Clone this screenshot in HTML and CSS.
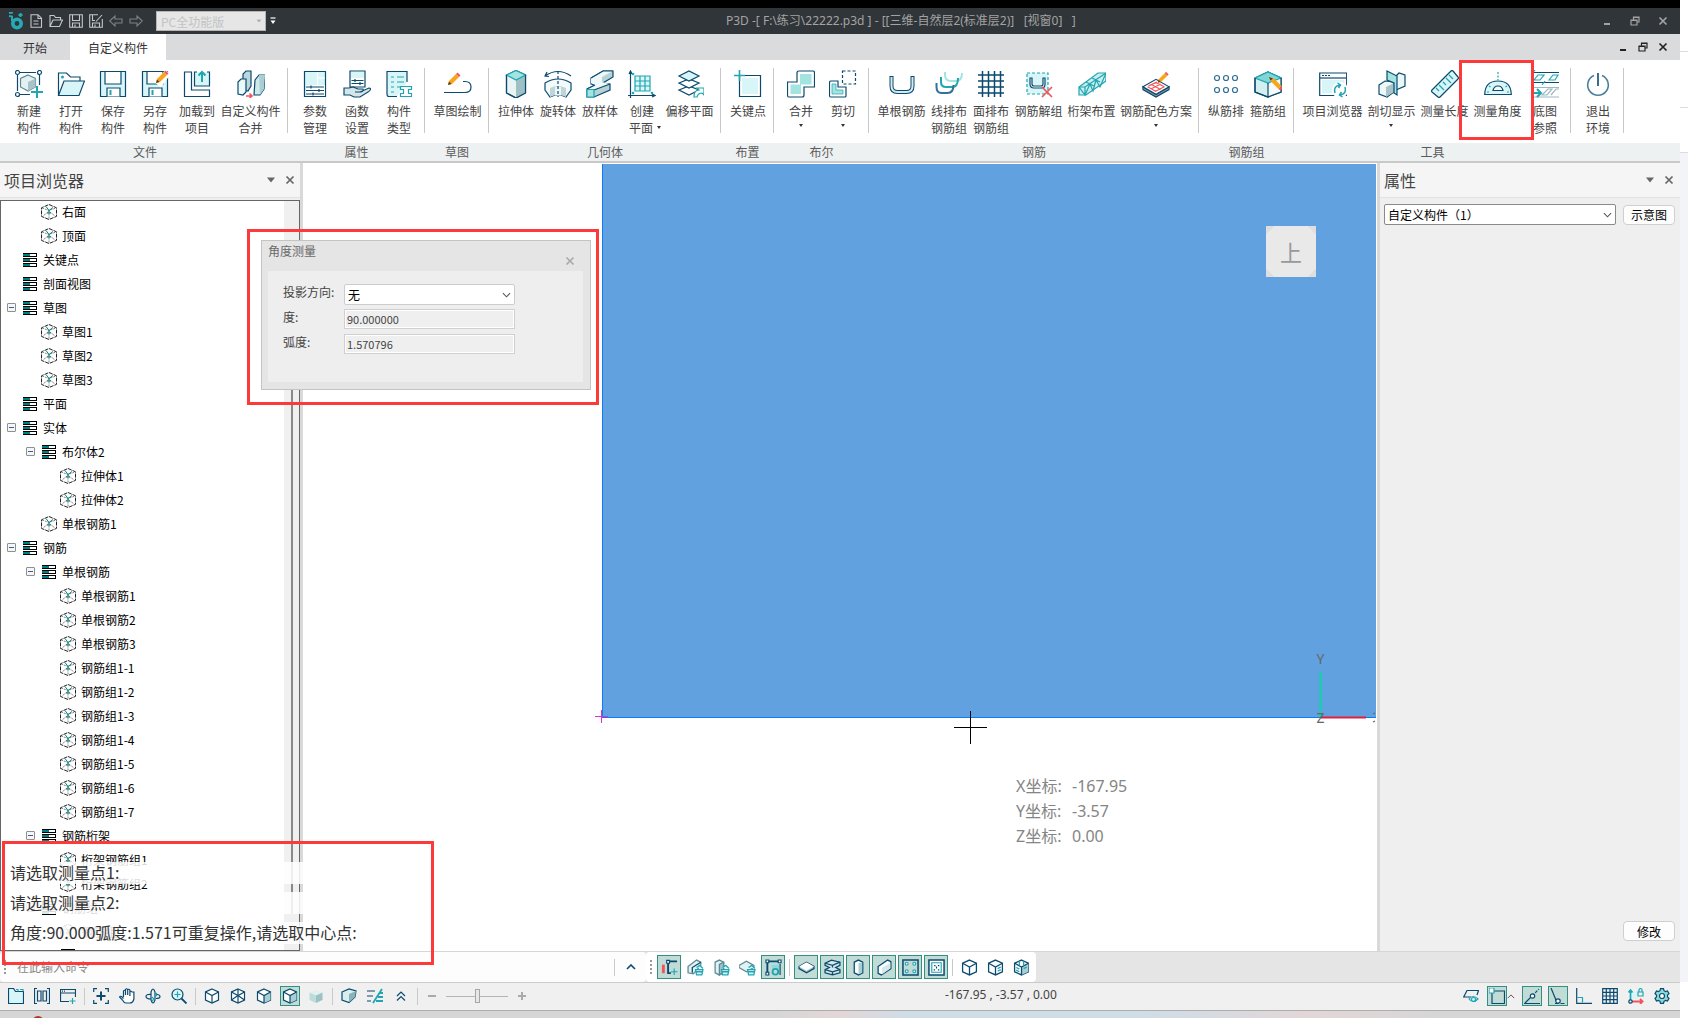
FILE: index.html
```html
<!DOCTYPE html>
<html lang="zh-CN">
<head>
    <meta charset="UTF-8">
    <meta name="viewport" content="width=device-width, initial-scale=1.0">
    <title>P3D</title>
    <link rel="stylesheet" href="styles.css">
</head>
<body>
<!-- 公用图标 -->
<svg class="defs" width="0" height="0" aria-hidden="true">
    <symbol id="i-cube" viewBox="0 0 16 16">
        <path d="M8 .5L15.500 3.800v8.600L8 15.500.500 12.400V3.800z" fill="#fff" stroke="#222" stroke-dasharray="4 1"/>
        <path d="M1 4l7 2.500L15 4M8 6.500V15M7 8l-5 4M9 8l5 4" stroke="#777" stroke-width=".9" stroke-dasharray="2 1"/>
        <path d="M5 2.500l3 4 4-3M8 6.500v3M6 9h4" stroke="#0a8080"/>
    </symbol>
    <symbol id="i-list" viewBox="0 0 16 16">
        <path d="M1 1h14v4H1zM1 6h14v4H1zM1 11h14v4H1z" fill="#000" stroke="none"/>
        <path d="M1 2h7v2H1zM1 7h7v2H1zM1 12h7v2H1z" fill="#008080" stroke="none"/>
        <path d="M8 2h6v2H8zM8 7h6v2H8zM8 12h6v2H8z" fill="#fff" stroke="none"/>
    </symbol>
    <symbol id="i-down" viewBox="0 0 10 6"><path d="M1 1l4 4 4-4" stroke="#555"/></symbol>
    <symbol id="i-up" viewBox="0 0 10 6"><path d="M1 5l4-4 4 4" stroke="currentColor"/></symbol>
    <symbol id="i-close" viewBox="0 0 10 10"><path d="M1.500 1.500l7 7M8.500 1.500l-7 7" stroke="currentColor" stroke-width="1.700"/></symbol>
    <symbol id="i-min" viewBox="0 0 10 10"><path d="M2 8h6" stroke="currentColor" stroke-width="2"/></symbol>
    <symbol id="i-restore" viewBox="0 0 10 10"><path d="M1 4h6v5H1zM1 4.500h6M3.500 3.500V1H9v5H7.500M3.500 1.500H9" stroke="currentColor" stroke-width="1.200"/></symbol>
    <symbol id="i-tri" viewBox="0 0 10 6"><path d="M1 .500h8l-4 5z" fill="currentColor" stroke="none"/></symbol>
    <symbol id="i-save" viewBox="0 0 28 28">
        <path d="M1.500 1.500h25v25h-25z" fill="#d8f6f7" stroke="#0b4a6f"/>
        <path d="M6 1.500h16V14H6z" fill="#fff" stroke="#0b4a6f"/>
        <path d="M8 26.500V18h13v8.500" fill="#fff" stroke="#0b4a6f"/>
        <path d="M11.500 20v5" stroke="#20a5b2" stroke-width="2"/>
    </symbol>
    <symbol id="i-pencil" viewBox="0 0 14 14">
        <path d="M1 13l1-4 7-7 3 3-7 7z" fill="#f9a51a" stroke="none"/>
        <path d="M9 2l1.500-1.500 3 3L12 5z" fill="#f2545b" stroke="none"/>
        <path d="M1 13l1-3.500 2.500 2.500z" fill="#5a3a22" stroke="none"/>
    </symbol>
    <symbol id="i-box" viewBox="0 0 16 16">
        <path d="M8 1l6.500 3v8L8 15l-6.500-3V4z" fill="#fff" stroke="#0b4a6f"/>
        <path d="M1.500 4L8 7.500 14.500 4M8 7.500V15" stroke="#0b4a6f"/>
    </symbol>
    <symbol id="i-boxf" viewBox="0 0 16 16">
        <path d="M8 1l6.500 3v8L8 15l-6.500-3V4z" fill="#fff" stroke="#0b4a6f"/>
        <path d="M8 7.500L14.500 4v8L8 15z" fill="#a8cfd3" stroke="none"/>
        <path d="M1.500 4L8 7.500 14.500 4M8 7.500V15" stroke="#0b4a6f"/>
    </symbol>
    <symbol id="i-bucket" viewBox="0 0 9 11"><path d="M1 5h7l-1 5H2zM1 7h7M2 3l3-2 3 3" fill="#d8f6f7" stroke="#20a5b2"/></symbol>
</svg>

<div class="screen">
<div class="app">
    <header class="titlebar">
        <svg class="logo" viewBox="0 0 16 18"><circle cx="9" cy="11.500" r="4.200" stroke="#27a9b5" stroke-width="3.600"/><path d="M4 9V4.500L1 4M1 1l4-.500M12.500 1v4M10.500 3h4" stroke="#27a9b5" stroke-width="2"/></svg>
        <button class="tb" aria-label="新建"><svg viewBox="0 0 14 14"><path d="M2 .700h7l3.500 3.500v9H2zM9 1v3.500h3.500M4.500 7h5M4.500 10h5"/></svg></button>
        <button class="tb" aria-label="打开"><svg viewBox="0 0 14 14"><path d="M1 12.500V1.500h4l1.500 2h5v2.500M1 12.500L4 6h9.500l-3 6.500z"/></svg></button>
        <button class="tb" aria-label="保存"><svg viewBox="0 0 14 14"><path d="M.700.700h12.600v12.600H.700zM3.500 1v5.500h7V1M3.500 13V9h7v4M6 10.500V13"/></svg></button>
        <button class="tb" aria-label="另存"><svg viewBox="0 0 14 14"><path d="M9 .700H.700v12.600h12.600V5M3.500 1v5.500H6M3.500 13V9h7v4M6 10.500V13M7 7.500L13 1"/></svg></button>
        <button class="tb dim" aria-label="撤销"><svg viewBox="0 0 14 14"><path d="M.700 7L6 2v3h7v4H6v3z"/></svg></button>
        <button class="tb dim" aria-label="重做"><svg viewBox="0 0 14 14"><path d="M13.300 7L8 2v3H1v4h7v3z"/></svg></button>
        <div class="edition">
            <select aria-label="版本" disabled><option>PC全功能版</option></select>
            <svg viewBox="0 0 10 6"><use href="#i-tri"/></svg>
        </div>
        <button class="more" aria-label="更多"><svg viewBox="0 0 6 8"><path d="M.500 1h5" stroke="#fff"/><path d="M.500 3.500h5L3 7z" fill="#fff" stroke="none"/></svg></button>
        <h1>P3D -[ F:\练习\22222.p3d ] - [[三维-自然层2(标准层2)] &nbsp;&nbsp;[视窗0] &nbsp;&nbsp;]</h1>
        <div class="win-buttons">
            <button aria-label="最小化"><svg><use href="#i-min"/></svg></button>
            <button aria-label="还原"><svg><use href="#i-restore"/></svg></button>
            <button aria-label="关闭"><svg><use href="#i-close"/></svg></button>
        </div>
    </header>

    <nav class="tabs">
        <a href="#start" class="tab">开始</a>
        <a href="#custom" class="tab active">自定义构件</a>
        <div class="doc-buttons">
            <button aria-label="最小化视窗"><svg><use href="#i-min"/></svg></button>
            <button aria-label="还原视窗"><svg><use href="#i-restore"/></svg></button>
            <button aria-label="关闭视窗"><svg><use href="#i-close"/></svg></button>
        </div>
    </nav>

    <div class="ribbon">
        <section class="group">
            <div class="tools">
                <button class="tool"><svg viewBox="0 0 28 28"><path d="M5 2.500h16M2.500 5v16M24.500 5v10M5 24.500h10"/><g fill="#fff"><circle cx="2.500" cy="2.500" r="2"/><circle cx="24.500" cy="2.500" r="2"/><circle cx="2.500" cy="24.500" r="2"/></g><path d="M13 5l7.500 3.500v8.500L13 21l-7.500-4V8.500z" fill="#e4f1f2" stroke="#5c8b96"/><path d="M13 12l7.500-3.500V17L13 21z" fill="#a9c3c8" stroke="none"/><path d="M22 16v12M16 22h12" stroke="#20a5b2" stroke-width="2"/></svg><span>新建<br>构件</span></button>
                <button class="tool"><svg viewBox="0 0 28 28"><path d="M1.500 25V3h8l4 4H23v5" fill="#fff"/><path d="M1.500 25.500L7 11h20.500L22 25.500z" fill="#d8f6f7"/><circle cx="5.500" cy="7" r="1.500" fill="#20a5b2" stroke="none"/></svg><span>打开<br>构件</span></button>
                <button class="tool"><svg><use href="#i-save"/></svg><span>保存<br>构件</span></button>
                <button class="tool"><svg viewBox="0 0 28 28"><use href="#i-save" width="28" height="28"/><path d="M17 15L27 2" stroke="#fff" stroke-width="7"/><use href="#i-pencil" x="14" y="0" width="14" height="14"/></svg><span>另存<br>构件</span></button>
                <button class="tool"><svg viewBox="0 0 28 28"><path d="M1.500 2h7v18h18v6.500h-25z" fill="#fff"/><path d="M14 2h-2.500v14h15V2H24" fill="#d8f6f7"/><path d="M19 12V2M15.500 5.500L19 2l3.500 3.500" stroke="#20a5b2" stroke-width="2"/></svg><span>加载到<br>项目</span></button>
                <button class="tool w5"><svg viewBox="0 0 28 28"><path d="M6 20V4l3-3h5v15l-3 5z" fill="#b9d7dc"/><path d="M1 24V12l3-3h5v13l-3 3z" fill="#eafafa"/><path d="M17 25l1-15 4-5h6l-1 14-4 6z" fill="#cfe8ea"/><path d="M22 5l6 0-1 14-4 6z" fill="#a8cfd3" stroke="none"/><path d="M9 26h6M12.500 23.500L15 26l-2.500 2" stroke="#f2545b" stroke-width="1.600"/></svg><span>自定义构件<br>合并</span></button>
            </div>
            <h2>文件</h2>
        </section>
        <section class="group">
            <div class="tools">
                <button class="tool"><svg viewBox="0 0 28 28"><path d="M3.500 1.500h21v25h-21z" fill="#d8f6f7"/><path d="M5 15h19v11H5z" fill="#fff" stroke="none"/><path d="M16.500 2v13M16.500 8H24" stroke="#fff"/><path d="M5 17h18M5 20.500h18M5 24h18M10 15.500v3M18 19v3M12 22.500v3"/></svg><span>参数<br>管理</span></button>
                <button class="tool"><svg viewBox="0 0 28 28"><path d="M7 1h15v16H7z" fill="#fff"/><path d="M8 2h13v6H8z" fill="#d8f6f7" stroke="none"/><path d="M8.500 10.500h12M8.500 13.500h12M12 9v3M17 12v3"/><path d="M1 18h5l4-1 5 2h5c1 2-1 3-4 3h-4 5l9-4c3 0 1 3-1 4l-8 5h-6l-4-2H1z" fill="#d5e5e8"/></svg><span>函数<br>设置</span></button>
                <button class="tool"><svg viewBox="0 0 28 28"><path d="M12 26.500H4Q2 26.500 2 24V1.500h20V12" fill="#d8f6f7"/><path d="M6 7h3M6 12h3M6 17h3M6 22h3M12 7h7M12 12h7M12 17h3" stroke="#20a5b2"/><path d="M15.500 16.500h11v3h-3v4h3v3h-11v-3h3v-4h-3z" fill="#fff" stroke="#20a5b2"/></svg><span>构件<br>类型</span></button>
            </div>
            <h2>属性</h2>
        </section>
        <section class="group">
            <div class="tools">
                <button class="tool w4"><svg viewBox="0 0 28 28"><path d="M0 22.500h21q6 0 6-5.500t-6-5.500h-2"/><use href="#i-pencil" x="3" y="2" width="14" height="14"/></svg><span>草图绘制</span></button>
            </div>
            <h2>草图</h2>
        </section>
        <section class="group">
            <div class="tools">
                <button class="tool"><svg viewBox="0 0 28 28"><path d="M4.500 5l9.500-4.500L23.500 5v18L14 28l-9.500-5z" fill="#eaf4f5"/><path d="M14 10l9.500-5v18L14 28z" fill="#9fc1c6" stroke="none"/><path d="M4.500 5l9.500-4.500L23.500 5 14 10z" fill="#a3e4e1" stroke="#20a5b2"/><path d="M4.500 5v18L14 28l9.500-5V5"/></svg><span>拉伸体</span></button>
                <button class="tool"><svg viewBox="0 0 28 28"><path d="M1 6q13-9 26 0M3 2L1 6l4 .500"/><path d="M1 13q13-8 26 0v7l-5 7q-8-4-16 0l-5-7z" fill="#f4fafa"/><path d="M6 18q8-4 16 0v9q-8-4-16 0z" fill="#bfd6d9" stroke="none"/><path d="M11 17q3-.600 6 0v8.500q-3-.500-6 0z" fill="#eef6f7" stroke="none"/><path d="M14 1v26" stroke-dasharray="3 2"/></svg><span>旋转体</span></button>
                <button class="tool"><svg viewBox="0 0 28 28"><path d="M1 19l8-4-4-1V8L17 1h10v6l-10 6 7 1v6L8 27H1z" fill="#b7d2d6"/><path d="M1 19l8-4-4-2V8L17 1h10l-11 6v5l8 2-16 6z" fill="#eef8f8" stroke="none"/><path d="M5 8L17 1h10M24 14L8 20M1 19l8-4"/><path d="M1 19.500h7V27H1z" fill="#a3e4e1" stroke="#20a5b2"/></svg><span>放样体</span></button>
                <button class="tool"><svg viewBox="0 0 28 28"><path d="M2.500 28V1M1 4l1.500-3L4 4M0 25.500h27M24 24l3 1.500-3 1.500"/><path d="M7 6h15v15H7z" fill="#d8f6f7" stroke="#20a5b2"/><path d="M12 6v15M17 6v15M7 11h15M7 16h15" stroke="#20a5b2"/><g fill="#20a5b2" stroke="none"><circle cx="5" cy="4" r="1.300"/><circle cx="5" cy="23" r="1.300"/><circle cx="24" cy="23" r="1.300"/></g></svg><span>创建<br>平面<i class="arrow"></i></span></button>
                <button class="tool w4"><svg viewBox="0 0 28 28"><g fill="#fff"><path d="M3 20l10-4 10 4-10 5z"/><path d="M3 13l10-4 10 4-10 5z"/><path d="M3 6l10-5 10 5-10 5z" fill="#d8f6f7"/></g><path d="M18 27q0-7 5-7l-2-2h7v7l-2-2q-4 0-5 4z" fill="#fff" stroke="#20a5b2"/></svg><span>偏移平面</span></button>
            </div>
            <h2>几何体</h2>
        </section>
        <section class="group">
            <div class="tools">
                <button class="tool"><svg viewBox="0 0 28 28"><path d="M5.500 5.500h21v21h-21z" fill="#fff"/><path d="M8 8h16v16H8z" fill="#d8f6f7" stroke="none"/><path d="M5.500 0v11M0 5.500h11" stroke="#20a5b2" stroke-width="1.600"/></svg><span>关键点</span></button>
            </div>
            <h2>布置</h2>
        </section>
        <section class="group">
            <div class="tools">
                <button class="tool"><svg viewBox="0 0 28 28"><path d="M12 1h14q1.500 0 1.500 1.500V17H17v8q0 2-2 2H2q-1.500 0-1.500-2V12H10V3q0-2 2-2z" fill="#fff"/><path d="M13 4h11.500v10.500H14v9.500H3.500V14.500H13z" fill="#a3e4e1" stroke="none"/></svg><span>合并<i class="arrow below"></i></span></button>
                <button class="tool"><svg viewBox="0 0 28 28"><path d="M2 11h7v6h8v9q0 1-1 1H2q-1.500 0-1.500-1.500v-13Q.500 11 2 11z" fill="#fff"/><path d="M3 14h4v6h7v4H3z" fill="#a3e4e1" stroke="#20a5b2" stroke-width=".7"/><path d="M13.500 1h13v13h-13z" stroke-dasharray="3 2"/></svg><span>剪切<i class="arrow below"></i></span></button>
            </div>
            <h2>布尔</h2>
        </section>
        <section class="group">
            <div class="tools">
                <button class="tool w4"><svg viewBox="0 0 28 28"><path d="M3.500 6v10q0 6 6 6h9q6 0 6-6V6" stroke-width="4"/><path d="M3.500 7v9q0 6 6 6h9q6 0 6-6V7" stroke="#d5ebee" stroke-width="2"/></svg><span>单根钢筋</span></button>
                <button class="tool"><svg viewBox="0 0 28 28"><g stroke-width="2"><path d="M10 2v3q0 6 6 6h5q6 0 6-8" stroke="#a3e4e1"/><path d="M6 7v5q0 5 5 5h6q6 0 6-9" stroke="#20a5b2"/><path d="M1.500 13v4q0 6 5 6h6q6 0 6-8" stroke="#34709c"/></g></svg><span>线排布<br>钢筋组</span></button>
                <button class="tool"><svg viewBox="0 0 28 28"><path d="M5.500 1v26M11.500 1v26M17.500 1v26M23.500 1v26M1 5h26M1 11h26M1 17h26M1 23h26" stroke-width="1.500"/></svg><span>面排布<br>钢筋组</span></button>
                <button class="tool w4"><svg viewBox="0 0 28 28"><path d="M2 3h21v21H2z" fill="#d8f6f7" stroke="#20a5b2" stroke-dasharray="3 2"/><path d="M5 8v6q0 4 4 4h8q3 0 3-4V8h-2v6q0 2-2 2H9q-2 0-2-2V8z" fill="#fff"/><path d="M17 17l10 10M27 17L17 27" stroke="#f2545b" stroke-width="1.700"/></svg><span>钢筋解组</span></button>
                <button class="tool w4"><svg viewBox="0 0 28 28"><g stroke="#20a5b2"><path d="M1 17L20 3l8 0v8L8 25l-7 0z" fill="#c8eeee"/><path d="M1 17h6L28 3M7 17v8M1 17l6 8 5-11 3 7 3-11 4 7 6-14M8 12l8 4M14 8l8 4"/></g></svg><span>桁架布置</span></button>
                <button class="tool w6"><svg viewBox="0 0 30 28"><path d="M1 17l14 8 14-8v3l-14 8-14-8z" fill="#7c979f"/><path d="M1 17L15 9l14 8-14 8z" fill="#fff"/><path d="M6 17l9 5M10 14.500l10 5.500M14 12l10 5M10 19l10-5M7 16l9-4M14 22l10-5" stroke="#f2545b"/><use href="#i-pencil" x="16" y="0" width="13" height="14"/></svg><span>钢筋配色方案<i class="arrow below"></i></span></button>
            </div>
            <h2>钢筋</h2>
        </section>
        <section class="group">
            <div class="tools">
                <button class="tool"><svg viewBox="0 0 28 28"><g stroke="#2f6f92"><circle cx="5" cy="8" r="2.500"/><circle cx="14" cy="8" r="2.500"/><circle cx="23" cy="8" r="2.500"/><circle cx="5" cy="20" r="2.500"/><circle cx="14" cy="20" r="2.500"/><circle cx="23" cy="20" r="2.500"/></g></svg><span>纵筋排</span></button>
                <button class="tool"><svg viewBox="0 0 28 28"><path d="M1 8l13-6 13 6v14l-13 5-13-5z" fill="#d3efef"/><path d="M14 13l13-5v14l-13 5z" fill="#f5fbfb" stroke="none"/><path d="M1 8l13-6 13 6-13 5z" fill="#7fd6d6" stroke="#20a5b2"/><path d="M1 8v14l13 5 13-5V8M14 13v14"/><path d="M15 7l2.500 5 7 7 3-3-7-7z" fill="#f9a51a" stroke="none"/><path d="M24.500 19l3-3 1 2.500-2 2z" fill="#f2545b" stroke="none"/><path d="M15 7l1.500 3.500 2.500-2z" fill="#5a3a22" stroke="none"/></svg><span>箍筋组</span></button>
            </div>
            <h2>钢筋组</h2>
        </section>
        <section class="group">
            <div class="tools">
                <button class="tool w5"><svg viewBox="0 0 28 28"><path d="M.700 3h27v22.500H.700z" fill="#fff"/><path d="M1 8h26.500" /><path d="M3 10h22v13H3z" fill="#d8f6f7" stroke="none"/><path d="M3 5.500h2M6 5.500h2M9 5.500h2"/><circle cx="21" cy="20" r="8" fill="#fff" stroke="none"/><path d="M16 23q-2-7 5-8M18.500 13l3 2-2 3M26 17q2 7-5 8M23.500 27l-3-2 2-3" stroke="#20a5b2" stroke-width="1.500"/></svg><span>项目浏览器</span></button>
                <button class="tool w4"><svg viewBox="0 0 28 28"><path d="M14 10l7-7 6 2v11l-9 4z" fill="#e9f7f7"/><path d="M1 15l6-4 9 1v10l-7 5-8-3z" fill="#eef8f8"/><path d="M8 17l8-4v9l-8 5z" fill="#a9c3c8" stroke="none"/><path d="M9 1l10 5v19l-3-2V13l-7-3z" fill="#a3e4e1"/></svg><span>剖切显示<i class="arrow below"></i></span></button>
                <button class="tool w4"><svg viewBox="0 0 28 28"><path d="M1 20L20 1q1-1 2 0l5 6q1 1 0 2L9 27q-1 1-2 0l-6-5q-1-1 0-2z" fill="#d8f6f7"/><path d="M5 18l3 3M8 15l5 5M12 12l3 3M15 8l5 5M18 5l4 4" stroke="#20a5b2"/></svg><span>测量长度</span></button>
                <button class="tool w4"><svg viewBox="0 0 28 28"><path d="M.700 24.500Q1 11 14 11t13.300 13.500z" fill="#d8f6f7"/><path d="M9 20.500q1-4.500 5-4.500t5 4.500z" fill="#fff"/><path d="M3 22h2M23 22h2M5 16l1.500 1M23 16l-1.500 1M14 2v8" stroke="#20a5b2" stroke-dasharray="2 1.500"/></svg><span>测量角度</span></button>
                <button class="tool"><svg viewBox="0 0 28 28"><path d="M0 2.500h28M0 12.500h28"/><path d="M0 17.500h28M0 27h28M11 25l6-6h4l-5 6zM20 25l5-6h3" stroke="#9eb8c0"/><path d="M3 10l4-5h6l-4 5zM18 10l4-5h5l-3 5zM0 4L4 0M11 15l3-4" stroke="#20a5b2"/><path d="M0 23h10M6 19l4 4-4 4" stroke="#20a5b2" stroke-width="2"/></svg><span>底图<br>参照</span></button>
            </div>
            <h2>工具</h2>
        </section>
        <section class="group">
            <div class="tools">
                <button class="tool"><svg viewBox="0 0 28 28"><path d="M10 5.500a10.300 10.300 0 1 0 8 0" stroke="#4c7f99" stroke-width="1.600"/><path d="M14 3v13" stroke-width="1.600"/></svg><span>退出<br>环境</span></button>
            </div>
            <h2></h2>
        </section>
        <section class="group rest"><div class="tools"></div><h2></h2></section>
    </div>

    <main class="workspace">
        <aside class="panel browser">
            <div class="panel-head">
                <h3>项目浏览器</h3>
                <button aria-label="选项"><svg viewBox="0 0 10 6"><use href="#i-tri"/></svg></button>
                <button aria-label="关闭面板"><svg><use href="#i-close"/></svg></button>
            </div>
            <div class="tree">
                <ul>
                    <li class="l2"><svg><use href="#i-cube"/></svg>右面</li>
                    <li class="l2"><svg><use href="#i-cube"/></svg>顶面</li>
                    <li class="l1"><svg><use href="#i-list"/></svg>关键点</li>
                    <li class="l1"><svg><use href="#i-list"/></svg>剖面视图</li>
                    <li class="l1 open"><svg><use href="#i-list"/></svg>草图</li>
                    <li class="l2"><svg><use href="#i-cube"/></svg>草图1</li>
                    <li class="l2"><svg><use href="#i-cube"/></svg>草图2</li>
                    <li class="l2"><svg><use href="#i-cube"/></svg>草图3</li>
                    <li class="l1"><svg><use href="#i-list"/></svg>平面</li>
                    <li class="l1 open"><svg><use href="#i-list"/></svg>实体</li>
                    <li class="l2 open"><svg><use href="#i-list"/></svg>布尔体2</li>
                    <li class="l3"><svg><use href="#i-cube"/></svg>拉伸体1</li>
                    <li class="l3"><svg><use href="#i-cube"/></svg>拉伸体2</li>
                    <li class="l2"><svg><use href="#i-cube"/></svg>单根钢筋1</li>
                    <li class="l1 open"><svg><use href="#i-list"/></svg>钢筋</li>
                    <li class="l2 open"><svg><use href="#i-list"/></svg>单根钢筋</li>
                    <li class="l3"><svg><use href="#i-cube"/></svg>单根钢筋1</li>
                    <li class="l3"><svg><use href="#i-cube"/></svg>单根钢筋2</li>
                    <li class="l3"><svg><use href="#i-cube"/></svg>单根钢筋3</li>
                    <li class="l3"><svg><use href="#i-cube"/></svg>钢筋组1-1</li>
                    <li class="l3"><svg><use href="#i-cube"/></svg>钢筋组1-2</li>
                    <li class="l3"><svg><use href="#i-cube"/></svg>钢筋组1-3</li>
                    <li class="l3"><svg><use href="#i-cube"/></svg>钢筋组1-4</li>
                    <li class="l3"><svg><use href="#i-cube"/></svg>钢筋组1-5</li>
                    <li class="l3"><svg><use href="#i-cube"/></svg>钢筋组1-6</li>
                    <li class="l3"><svg><use href="#i-cube"/></svg>钢筋组1-7</li>
                    <li class="l2 open"><svg><use href="#i-list"/></svg>钢筋桁架</li>
                    <li class="l3"><svg><use href="#i-cube"/></svg>桁架钢筋组1</li>
                    <li class="l3"><svg><use href="#i-cube"/></svg>桁架钢筋组2</li>
                    <li class="l2 open"><svg><use href="#i-list"/></svg>钢筋组</li>
                    <li class="l3"><svg><use href="#i-cube"/></svg>钢筋组</li>
                    <li class="l3"><svg><use href="#i-list"/></svg>桁架组</li>
                </ul>
                <div class="scrollbar"><div class="thumb"></div></div>
            </div>
        </aside>

        <div class="canvas">
            <div class="solid"></div>
            <svg class="origin" viewBox="0 0 13 13"><path d="M6.500 0v13M0 6.500h13" stroke="#e032c8"/></svg>
            <div class="view-cube">上</div>
            <svg class="axis" viewBox="0 0 64 84">
                <path d="M8.500 26v46" stroke="#0fd3a8" stroke-width="2"/>
                <path d="M9 71.500h45" stroke="#e0203c" stroke-width="2"/>
                <text x="8.500" y="18">Y</text>
                <text x="8.500" y="77">Z</text>
                <path d="M61 68l2-1M61 76l2-1" stroke="#666"/>
            </svg>
            <svg class="crosshair" viewBox="0 0 33 33"><path d="M16.500 0v33M0 16.500h33" stroke="#000"/></svg>
            <dl class="coords">
                <dt>X坐标:</dt><dd>-167.95</dd>
                <dt>Y坐标:</dt><dd>-3.57</dd>
                <dt>Z坐标:</dt><dd>0.00</dd>
            </dl>
        </div>

        <aside class="panel props">
            <div class="panel-head">
                <h3>属性</h3>
                <button aria-label="选项"><svg viewBox="0 0 10 6"><use href="#i-tri"/></svg></button>
                <button aria-label="关闭面板"><svg><use href="#i-close"/></svg></button>
            </div>
            <div class="props-row">
                <div class="select">
                    <select aria-label="构件"><option>自定义构件（1）</option></select>
                    <svg><use href="#i-down"/></svg>
                </div>
                <button class="btn">示意图</button>
            </div>
            <div class="props-foot"><button class="btn">修改</button></div>
        </aside>

        <!-- 命令提示 -->
        <div class="messages">
            <p>请选取测量点1:</p>
            <p>请选取测量点2:</p>
            <p>角度:90.000弧度:1.571可重复操作,请选取中心点:</p>
        </div>

        <div class="dialog" role="dialog" aria-label="角度测量">
            <div class="dialog-head">
                <h3>角度测量</h3>
                <button aria-label="关闭对话框"><svg><use href="#i-close"/></svg></button>
            </div>
            <form class="dialog-body">
                <label for="direction">投影方向:</label>
                <div class="select">
                    <select id="direction"><option>无</option></select>
                    <svg><use href="#i-down"/></svg>
                </div>
                <label for="degree">度:</label>
                <input type="text" id="degree" value="90.000000" readonly>
                <label for="radian">弧度:</label>
                <input type="text" id="radian" value="1.570796" readonly>
            </form>
        </div>
    </main>

    <div class="command-row">
        <div class="command">
            <i class="grip"></i>
            <input type="text" placeholder="在此输入命令" aria-label="命令">
            <i class="sep"></i>
            <button class="expand" aria-label="展开"><svg viewBox="0 0 10 6"><use href="#i-up"/></svg></button>
        </div>
        <div class="bar">
            <i class="grip"></i>
            <button class="on" aria-label="梁"><svg viewBox="0 0 18 18"><path d="M1 6h3v9H1z" fill="#f2545b" stroke="none"/><path d="M7.500 3v12h3M9 2.500h8" stroke-width="2"/><path d="M6 1.500h3v3H6z" fill="#fff"/><path d="M14 10v7M10.500 13.500h7" stroke="#20a5b2"/></svg></button>
            <button aria-label="墙"><svg viewBox="0 0 16 16"><path d="M1 7l8-6 4 2v3l-7 8-5-1z" fill="#e4f1f2" stroke="#5c8b96"/><path d="M5 13V8l8-5"/><use href="#i-bucket" x="7" y="5" width="9" height="11"/></svg></button>
            <button aria-label="柱"><svg viewBox="0 0 16 16"><path d="M2 3l4-2 4 2v10l-4 2-4-2z" fill="#e4f1f2" stroke="#5c8b96"/><path d="M6 5l4-2v9l-4 3z" fill="#9fc1c6" stroke="#5c8b96"/><use href="#i-bucket" x="7" y="5" width="9" height="11"/></svg></button>
            <button aria-label="板"><svg viewBox="0 0 16 16"><path d="M0 6l7-4 7 4v2l-7 4-7-4z" fill="#e4f1f2" stroke="#5c8b96"/><use href="#i-bucket" x="7" y="5" width="9" height="11"/></svg></button>
            <button class="on" aria-label="选择"><svg viewBox="0 0 18 18"><path d="M3 2.500h12M2.500 3v12" stroke-width="2"/><path d="M7 6h9v5H7z" fill="#8bdada" stroke="none"/><path d="M1 1h3v3H1zM14 1h3v3h-3zM1 14h3v3H1z" fill="#fff"/><circle cx="11" cy="13.500" r="3" stroke="#20a5b2" stroke-width="2"/><path d="M16 5v12"/></svg></button>
            <i class="sep"></i>
            <button class="on" aria-label="显示板"><svg viewBox="0 0 16 16"><path d="M1 7l7-4 7 4v2l-7 4-7-4z" fill="#9fc1c6"/><path d="M1 7l7-4 7 4-7 4z" fill="#fff" stroke="none"/></svg></button>
            <button class="on" aria-label="显示梁"><svg viewBox="0 0 16 16"><path d="M1 4l6-3 8 2v3l-4 2 4 2v3l-7 2-7-2v-3l4-2-4-2z" fill="#d5e8ea"/><path d="M1 4l7 2 7-3M8 6v2M1 10l7 2 7-2M8 12v3"/></svg></button>
            <button class="on" aria-label="显示柱"><svg viewBox="0 0 16 16"><path d="M4 3l4-2 4 2v10l-4 2-4-2z" fill="#fff"/><path d="M8 4l3.500-1v10L8 14.500z" fill="#a8cfd3" stroke="none"/></svg></button>
            <button class="on" aria-label="显示墙"><svg viewBox="0 0 16 16"><path d="M2 7l9-6 3 1.500V9l-9 6-3-1.500z" fill="#fff"/><path d="M5.500 8.500l8-5V9l-8 5.500z" fill="#d5e8ea" stroke="none"/></svg></button>
            <button class="on" aria-label="显示钢筋"><svg viewBox="0 0 18 18"><path d="M1 1h16v16H1z" stroke-width="1.600"/><g stroke="#20a5b2" fill="#fff"><circle cx="5" cy="5" r="1.500"/><circle cx="13" cy="5" r="1.500"/><circle cx="5" cy="13" r="1.500"/><circle cx="13" cy="13" r="1.500"/></g></svg></button>
            <button class="on" aria-label="显示预埋"><svg viewBox="0 0 18 18"><path d="M1 1h16v16H1z" fill="#fff" stroke-width="1.600"/><path d="M4 4h10v10H4z" stroke="#20a5b2"/><path d="M6.500 7h1.500M10.500 7H12M9 8v2M6 11.500h1.500M10.500 11.500H12"/></svg></button>
            <i class="sep"></i>
            <button aria-label="线框"><svg><use href="#i-box"/></svg></button>
            <button aria-label="着色"><svg viewBox="0 0 16 16"><use href="#i-box"/><path d="M10 9l3-1.500M10 11.500l3-1.500" stroke="#20a5b2"/></svg></button>
            <button aria-label="透明"><svg viewBox="0 0 16 16"><use href="#i-boxf"/><path d="M6 2v4M10 2v4M3 8l3 1.500M3 10.500L6 12M10 9l3-1.500" stroke="#20a5b2"/></svg></button>
        </div>
    </div>

    <footer class="statusbar">
        <div class="icons">
            <button aria-label="新视窗"><svg viewBox="0 0 16 16"><path d="M.500 15.500v-15h5l2 3h8v12z" fill="#d8f6f7"/><path d="M8 1.500h2v2M12 1.500h3v2" stroke="#20a5b2"/></svg></button>
            <button aria-label="并排"><svg viewBox="0 0 16 16"><path d="M3 .500H.500v15H3M13 .500h2.500v15H13M3.500 3h3.500v10H3.500zM9 3h3.500v10H9z"/></svg></button>
            <button aria-label="添加视窗"><svg viewBox="0 0 16 16"><path d="M9 13.500H.500v-12h15V9M.500 5h15M2 3.200h1M4 3.200h1"/><path d="M12.500 10v6M9.500 13h6" stroke="#20a5b2"/></svg></button>
            <i class="sep"></i>
            <button aria-label="全图"><svg viewBox="0 0 16 16"><path d="M.700 4V.700H4M12 .700h3.300V4M15.300 12v3.300H12M4 15.300H.700V12"/><path d="M8 3.500v9M3.500 8h9" stroke-width="2"/></svg></button>
            <button aria-label="平移"><svg viewBox="0 0 16 16"><path d="M4.500 9V3q1-1.500 2 0v4V1.500q1-1.500 2.200 0V7 2q1-1.500 2.200 0v6-4q1-1.500 2 0l2 0v7q-1 4-4 4H7q-2 0-3.500-3L.500 9q1-1.500 2.500 0l1.500 1.500" fill="#fff"/></svg></button>
            <button aria-label="旋转"><svg viewBox="0 0 16 16"><path d="M6 4q2-6 4 0v8q-2 6-4 0zM6 6.500Q1 6 1 8.500T6 11M10 6q5 .500 5 2.500t-4 2"/><path d="M7 9l2 2-2 2M12 5l-2 1.500L12 8" stroke="#20a5b2"/></svg></button>
            <button aria-label="缩放"><svg viewBox="0 0 16 16"><circle cx="6.500" cy="6.500" r="5.500" fill="#d8f6f7"/><path d="M10.500 10.500l5 5" stroke-width="1.800"/><path d="M6.500 3.500v6M3.500 6.500h6" stroke="#20a5b2"/></svg></button>
            <i class="sep"></i>
            <button aria-label="线框模式"><svg><use href="#i-box"/></svg></button>
            <button aria-label="消隐"><svg viewBox="0 0 16 16"><use href="#i-box"/><path d="M8 1v6.500L1.500 12M8 7.500l6.500 4.500"/></svg></button>
            <button aria-label="灰度"><svg><use href="#i-boxf"/></svg></button>
            <button class="on" aria-label="着色模式"><svg><use href="#i-boxf"/></svg></button>
            <button aria-label="真实"><svg viewBox="0 0 16 16"><path d="M8 2l6.500 2.500L8 7.500 1.500 4.500z" fill="#e2efef" stroke="none"/><path d="M1.500 4.500l6.500 3V15l-6.500-3z" fill="#bcdcdc" stroke="none"/><path d="M14.500 4.500L8 7.500V15l6.500-3z" fill="#9cc3c3" stroke="none"/></svg></button>
            <i class="sep"></i>
            <button aria-label="剖切"><svg viewBox="0 0 16 16"><path d="M1 4l7-3 7 2-1 6-6 5.500L1 12z" fill="#d9eeee"/><path d="M8 6l7-3-1 6-6 5.500z" fill="#8ab3b9" stroke="none"/></svg></button>
            <button aria-label="过滤"><svg viewBox="0 0 16 16"><path d="M0 3h8M0 8h6M0 13h4"/><path d="M15 1L6 15M13 5h3M11 9h5M9 13h7" stroke="#20a5b2" stroke-width="1.800"/></svg></button>
            <button aria-label="收起"><svg viewBox="0 0 16 16"><path d="M4 8l4-4 4 4M4 12.500l4-4 4 4"/></svg></button>
            <i class="sep"></i>
            <button class="zoom-btn" aria-label="缩小"><svg viewBox="0 0 8 8"><path d="M0 4h8"/></svg></button>
            <input type="range" aria-label="缩放比例" min="0" max="100" value="50">
            <button class="zoom-btn" aria-label="放大"><svg viewBox="0 0 8 8"><path d="M0 4h8M4 0v8"/></svg></button>
        </div>
        <span class="position">-167.95 , -3.57 , 0.00</span>
        <div class="icons right">
            <button aria-label="工作面"><svg viewBox="0 0 16 16"><path d="M8 9H.700L4 2.500h11.500L14 7"/><path d="M6 11q4-5 9 0-5 5-9 0z" fill="#d8f6f7" stroke="#20a5b2"/><circle cx="10.500" cy="11.500" r="2" stroke="#20a5b2"/></svg></button>
            <button class="on" aria-label="对象捕捉"><svg viewBox="0 0 16 16"><path d="M3 3h12.500v12.500H3z"/><path d="M0 0h5v5H0z" fill="#fff" stroke="#20a5b2"/></svg></button>
            <button class="tiny" aria-label="捕捉设置"><svg viewBox="0 0 10 6"><use href="#i-up"/></svg></button>
            <button class="on" aria-label="最近点"><svg viewBox="0 0 16 16"><path d="M0 15.500h16M1 15L8 8"/><path d="M8 8l7-7" stroke-dasharray="3 1.500"/><circle cx="8.500" cy="8" r="2.200" fill="#fff"/></svg></button>
            <button class="on" aria-label="角度捕捉"><svg viewBox="0 0 16 16"><path d="M1 0l6 14.500"/><path d="M5 15.500h11" stroke-dasharray="4 1.500"/><circle cx="8" cy="13" r="2.200" fill="#fff"/></svg></button>
            <button aria-label="正交"><svg viewBox="0 0 16 16"><path d="M.700 0v15.300H16"/><path d="M1.500 9.500h5v5" stroke="#20a5b2"/></svg></button>
            <button aria-label="栅格"><svg viewBox="0 0 16 16"><path d="M.700.700h14.600v14.600H.700zM4.300 1v14M8 1v14M11.700 1v14M1 4.300h14M1 8h14M1 11.700h14"/></svg></button>
            <button aria-label="锁定坐标"><svg viewBox="0 0 16 16"><path d="M3 3h6v8H3z" fill="#d8f6f7" stroke="none"/><path d="M2.500 12V3M.500 4.500L2.500 2l2 2.500" stroke="#20a5b2" stroke-width="1.700"/><path d="M4 13.500h10M12 11l2.500 2.500L12 16" stroke="#f2545b" stroke-width="1.900"/><circle cx="2.500" cy="13.500" r="1.700"/><path d="M10 4h5v4h-5zM11 4V1.500q1.500-2 3 0V4" stroke="#20a5b2"/></svg></button>
            <button aria-label="设置"><svg viewBox="0 0 16 16"><path d="M6.500.700h3l.500 2 1.500.900 2-.600 1.500 2.600L13.500 7v2l1.500 1.400-1.500 2.600-2-.600-1.500.900-.500 2h-3l-.500-2-1.500-.900-2 .600L1 10.400 2.500 9V7L1 5.600 2.500 3l2 .600L6 2.700z" fill="#8bdada"/><circle cx="8" cy="8" r="2.500" fill="#fff"/></svg></button>
        </div>
    </footer>
    <div class="taskbar"><i class="badge"></i></div>

    <!-- 标注框 -->
    <div class="mark mark-tool"></div>
    <div class="mark mark-dialog"></div>
    <div class="mark mark-messages"></div>
</div>
<div class="edge"><i></i><i></i><i></i></div>
</div>
</body>
</html>
```

FILE: styles.css
```css
:root {
    --navy: #0b4a6f;
    --teal: #20a5b2;
    --on-bg: #c1dcd7;
    --on-border: #31917e;
    --mark: #fd3a3a;
    --latin-first: "Noto Sans", "Noto Sans CJK SC", sans-serif;
}
*, *::before { box-sizing: border-box; }
body { margin: 0; font-family: "Noto Sans CJK SC", "Noto Sans", sans-serif; font-size: 12px; line-height: 17px; color: #444; background-color: #fff; }
h1, h2, h3, p, ul, dl, dd { margin: 0; padding: 0; font-weight: 400; }
button { padding: 0; border: 0; background: none; font: inherit; color: inherit; }
select, input { font: inherit; color: inherit; }
svg { display: block; flex: none; fill: none; stroke: var(--navy); stroke-width: 1.2; }
.defs { position: absolute; }

.screen { display: flex; height: 100vh; overflow: hidden; }
.app { position: relative; flex: 1; min-width: 0; display: flex; flex-direction: column; }
.edge { width: 8px; padding-top: 51px; background: linear-gradient(#fff 152px, #f3f4f8 152px, #f3f4f8 982px, #fff 982px); }
.edge i { display: block; height: 1px; margin-bottom: 55px; background-color: #dcdce0; }
.edge i:nth-child(2) { margin-bottom: 44px; }

/* title bar */
.titlebar { display: flex; align-items: center; height: 34px; border-top: 8px solid #000; padding-left: 8px; background-color: #303539; color: #a3a3a3; }
.logo { width: 16px; height: 18px; margin-right: 2px; }
.tb { width: 20px; display: flex; justify-content: center; }
.tb svg { width: 14px; height: 14px; stroke: #c4c8ca; stroke-width: 1.1; }
.tb.dim svg { stroke: #7c8184; }
.edition { position: relative; margin-left: 10px; }
.edition select { display: block; width: 110px; height: 20px; padding: 0 4px; border: 1px solid #b5b5b5; background-color: #e6e6e6; color: #c3c3c3; opacity: 1; appearance: none; }
.edition svg { position: absolute; right: 4px; top: 8px; width: 6px; height: 4px; color: #aaa; }
.more { margin-left: 4px; }
.more svg { width: 6px; height: 8px; }
.titlebar h1 { flex: 1; margin-left: 450px; font-family: var(--latin-first); font-size: 12px; line-height: 18px; white-space: nowrap; }
.win-buttons, .doc-buttons { display: flex; align-items: center; }
.win-buttons { gap: 18px; padding-right: 12px; }
.win-buttons svg, .doc-buttons svg, .panel-head svg { width: 10px; height: 10px; }

/* tabs */
.tabs { display: flex; height: 26px; background-color: #dadbdd; color: #222; }
.tab { padding: 0 18px; line-height: 27px; color: #333; text-decoration: none; }
.tab:first-child { padding: 0 23px; }
.tab.active { background-color: #fff; }
.doc-buttons { margin-left: auto; gap: 10px; padding-right: 12px; }

/* ribbon */
.ribbon { display: flex; padding-left: 2px; background: linear-gradient(#fff 83px, #edf1f2 83px); border-bottom: 2px solid #c9c9c9; }
.group { display: flex; flex-direction: column; flex: none; }
.group h2 { height: 18px; font-size: 12px; line-height: 18px; text-align: center; color: #5b5b5b; }
.tools { position: relative; display: flex; height: 83px; padding: 10px 5px 0 6px; }
.tools::after { content: ""; position: absolute; right: 0; top: 8px; width: 1px; height: 65px; background-color: #c9c9c9; }
.rest { flex: 1; }
.rest .tools::after { display: none; }
.tool { width: 42px; display: flex; flex-direction: column; align-items: center; gap: 4px; white-space: nowrap; }
.tool.w4 { width: 53px; }
.tool.w5 { width: 65px; }
.tool.w6 { width: 76px; }
.tool svg { width: 28px; height: 28px; }
.arrow { display: inline-block; margin: 0 -6px 4px 4px; border: 2px solid transparent; border-top: 3px solid #333; border-bottom: 0; }
.arrow.below { display: block; width: 4px; margin: 5px auto 0; }

/* workspace */
.workspace { position: relative; flex: 1; min-height: 0; display: flex; }
.panel { flex: none; display: flex; flex-direction: column; min-height: 0; background-color: #efefef; }
.panel-head { display: flex; align-items: center; height: 35px; padding: 0 6px 0 4px; background-color: #f5f5f5; border-bottom: 1px solid #e2e2e2; color: #666; }
.panel-head h3 { flex: 1; font-size: 16px; line-height: 24px; color: #444; }
.panel-head button + button { margin-left: 9px; }
.panel-head button:first-of-type svg { height: 6px; }
.browser { width: 303px; border-right: 3px solid #d9d9d9; }
.browser .panel-head { padding-right: 5px; }
.tree { flex: 1; min-height: 0; display: flex; overflow: hidden; margin-top: 2px; border: 1px solid #666; background-color: #fff; color: #000; }
.tree ul { flex: 1; list-style: none; }
.tree li { display: flex; align-items: center; gap: 5px; height: 24px; padding-bottom: 3px; white-space: nowrap; }
.tree li::before { content: ""; width: 9px; height: 9px; margin-right: 1px; }
.tree li.open::before { border: 1px solid #8f8f8f; border-radius: 1px; background: linear-gradient(#3b5ba5, #3b5ba5) center / 5px 1px no-repeat #f6f6f6; }
.tree svg { width: 16px; height: 16px; stroke-width: 1; }
.l1 { padding-left: 6px; }
.l2 { padding-left: 25px; }
.l3 { padding-left: 44px; }
.scrollbar { width: 15px; padding: 120px 0 36px 7px; background-color: #f0f0f0; }
.thumb { width: 2px; height: 100%; background-color: #8a8a8a; }

/* drawing area, items sit freely on it */
.canvas { position: relative; flex: 1; background-color: #fff; border-right: 1px solid #fff; overflow: hidden; }
.solid { position: absolute; left: 299px; right: 0; top: 1px; height: 554px; background-color: #62a1e0; border-left: 1px solid #0a7cf5; border-bottom: 1px solid #0a7cf5; }
.origin { position: absolute; left: 292px; top: 547px; width: 13px; height: 13px; stroke-width: 1; }
.view-cube { position: absolute; right: 60px; top: 63px; width: 50px; height: 51px; background: linear-gradient(135deg, #dedede 6px, transparent 6px), linear-gradient(225deg, #dedede 6px, transparent 6px), linear-gradient(45deg, #dedede 6px, transparent 6px), linear-gradient(315deg, #dedede 6px, transparent 6px), #e9e9e9; font-size: 22px; line-height: 50px; text-align: center; color: #999; }
.axis { position: absolute; right: 0; top: 483px; width: 64px; height: 84px; }
.axis text { font-family: var(--latin-first); font-size: 14px; text-anchor: middle; fill: #666; stroke: none; }
.crosshair { position: absolute; left: 651px; top: 548px; width: 33px; height: 33px; stroke-width: 1; }
.coords { position: absolute; left: 713px; top: 611px; display: grid; grid-template-columns: 56px auto; font-family: var(--latin-first); font-size: 16px; line-height: 25px; color: #858585; }

/* properties */
.props { width: 303px; border-left: 3px solid #d9d9d9; }
.props-row { display: flex; align-items: center; gap: 7px; padding: 6px 5px 0 4px; }
.props-row .select { flex: 1; }
.select { position: relative; }
.select select { display: block; width: 100%; height: 21px; padding: 0 3px 1px; border: 1px solid #8a8a8a; border-radius: 2px; background-color: #fff; color: #000; appearance: none; }
.select svg { position: absolute; right: 4px; top: 8px; width: 9px; height: 6px; }
.btn { width: 52px; height: 20px; border: 1px solid #cfcfcf; border-radius: 4px; background-color: #fdfdfd; color: #000; line-height: 17px; }
.props-foot { margin-top: auto; padding: 0 5px 10px; text-align: right; }

/* command messages */
.messages { position: absolute; left: 3px; bottom: 7px; width: 428px; display: flex; flex-direction: column; gap: 8px; font-size: 16px; line-height: 20px; color: #333; }
.messages p { height: 22px; padding-left: 7px; background-color: rgba(255, 255, 255, .85); white-space: nowrap; }

/* angle dialog */
.dialog { position: absolute; left: 261px; top: 77px; width: 330px; padding: 0 7px 7px 6px; border: 1px solid #c4c4c4; background-color: #e5e5e5; }
.dialog-head { display: flex; justify-content: space-between; height: 30px; color: #6a6a6a; }
.dialog-head h3 { font-size: 12px; line-height: 20px; }
.dialog-head button { margin: 9px 8px 0 0; color: #aaa; }
.dialog-head svg { width: 10px; height: 10px; }
.dialog-body { display: grid; grid-template-columns: 61px 171px; grid-auto-rows: 21px; row-gap: 4px; height: 111px; padding: 13px 15px 0; background-color: #eee; }
.dialog-body label { line-height: 15px; }
.dialog-body input { width: 171px; height: 20px; padding: 0 2px 1px; border: 1px solid #d0d0d0; background-color: #efefef; font-size: 11px; outline: 0; box-shadow: inset 0 0 0 1px #fff; }
.dialog-body .select select { border-color: #ccc; }

/* command line and display toggles */
.command-row { display: flex; height: 32px; border-top: 1px solid #d6d6d6; border-bottom: 1px solid #cbcbcb; background-color: #e5e5e5; }
.command, .bar { display: flex; align-items: center; background-color: #fff; border-radius: 4px; }
.command { width: 646px; padding: 0 10px 0 4px; background-color: #fdfdfd; }
.command input { flex: 1; padding: 0 0 2px; border: 0; background: none; outline: 0; }
.command input::placeholder { color: #888; }
.command .grip { margin-right: 11px; }
.grip { width: 2px; height: 14px; background: repeating-linear-gradient(#999 0 2px, transparent 2px 4px); }
.sep { width: 1px; height: 17px; background-color: #c9c9c9; }
.expand { margin-left: 11px; color: var(--navy); }
.expand svg { width: 10px; height: 6px; stroke-width: 1.6; }
.bar { gap: 2px; padding: 0 3px 0 4px; }
.bar .grip { margin-right: 3px; }
.bar .sep { margin: 0 2px; }
.bar button, .icons button { display: flex; align-items: center; justify-content: center; }
.bar button { width: 24px; height: 24px; border: 1px solid transparent; }
.bar svg { width: 17px; height: 17px; }
.bar .on, .icons .on { border: 1px solid var(--on-border); background-color: var(--on-bg); }

/* status bar */
.statusbar { position: relative; display: flex; align-items: center; justify-content: space-between; height: 28px; padding: 0 8px 1px 6px; background-color: #f0f0f0; border-bottom: 1px solid #adadad; }
.icons { display: flex; align-items: center; gap: 6px; }
.icons button { width: 20px; height: 20px; }
.icons svg { width: 16px; height: 16px; }
.icons button.tiny { width: 8px; margin: 0 1px 0 -6px; color: #555; }
.icons .tiny svg { width: 8px; height: 5px; }
.icons .zoom-btn { width: 16px; }
.icons .zoom-btn svg { width: 8px; height: 8px; stroke: #aaa; stroke-width: 2; }
.icons input { width: 62px; height: 14px; margin: 0; appearance: none; background: linear-gradient(#b5b5b5, #b5b5b5) center / 100% 1px no-repeat; }
.icons input::-webkit-slider-thumb { appearance: none; width: 5px; height: 14px; border: 1px solid #a5a5a5; background-color: #e8e8e8; }
.position { position: absolute; left: 945px; top: 3px; font-family: var(--latin-first); line-height: 18px; }
.taskbar { height: 7px; background: linear-gradient(90deg, #d6d6d6 0 46%, #e4d6d8 50%, #cfdde6 54% 68%, #e2d6d8 78%, #d6d6d6 86%); overflow: hidden; }
.badge { display: block; width: 12px; height: 12px; margin: 5px 0 0 32px; border-radius: 50%; background-color: #b3352c; }

/* red marks laid over the interface */
.mark { position: absolute; border: 3px solid var(--mark); pointer-events: none; }
.mark-tool { left: 1459px; top: 60px; width: 75px; height: 80px; }
.mark-dialog { left: 247px; top: 229px; width: 352px; height: 176px; }
.mark-messages { left: 2px; bottom: 53px; width: 432px; height: 124px; }
```
